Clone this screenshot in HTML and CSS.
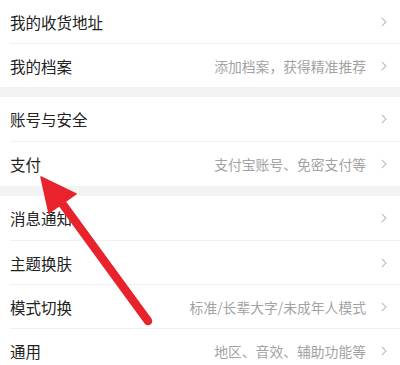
FILE: index.html
```html
<!DOCTYPE html>
<html lang="zh">
<head>
<meta charset="utf-8">
<link rel="stylesheet" href="styles.css">
</head>
<body>
<div class="page">
  <div class="group">
    <div class="row first"><span class="title">我的收货地址</span><span class="desc"></span><svg class="chev" viewBox="0 0 6 10"><polyline points="0.8,0.8 5,5 0.8,9.2"/></svg></div>
    <div class="row"><span class="title">我的档案</span><span class="desc">添加档案，获得精准推荐</span><svg class="chev" viewBox="0 0 6 10"><polyline points="0.8,0.8 5,5 0.8,9.2"/></svg></div>
  </div>
  <div class="band"></div>
  <div class="group">
    <div class="row"><span class="title">账号与安全</span><span class="desc"></span><svg class="chev" viewBox="0 0 6 10"><polyline points="0.8,0.8 5,5 0.8,9.2"/></svg></div>
    <div class="row last"><span class="title">支付</span><span class="desc">支付宝账号、免密支付等</span><svg class="chev" viewBox="0 0 6 10"><polyline points="0.8,0.8 5,5 0.8,9.2"/></svg></div>
  </div>
  <div class="band"></div>
  <div class="group">
    <div class="row"><span class="title">消息通知</span><span class="desc"></span><svg class="chev" viewBox="0 0 6 10"><polyline points="0.8,0.8 5,5 0.8,9.2"/></svg></div>
    <div class="row"><span class="title">主题换肤</span><span class="desc"></span><svg class="chev" viewBox="0 0 6 10"><polyline points="0.8,0.8 5,5 0.8,9.2"/></svg></div>
    <div class="row"><span class="title">模式切换</span><span class="desc">标准/长辈大字/未成年人模式</span><svg class="chev" viewBox="0 0 6 10"><polyline points="0.8,0.8 5,5 0.8,9.2"/></svg></div>
    <div class="row"><span class="title">通用</span><span class="desc">地区、音效、辅助功能等</span><svg class="chev" viewBox="0 0 6 10"><polyline points="0.8,0.8 5,5 0.8,9.2"/></svg></div>
  </div>
  <svg class="arrow" viewBox="0 0 400 365" width="400" height="365">
    <line x1="148" y1="321" x2="56" y2="195" stroke="#e8232b" stroke-width="8.5" stroke-linecap="round"/>
    <polygon points="41,177 76,194 49,213" fill="#e8232b" stroke="#e8232b" stroke-width="1.5" stroke-linejoin="round"/>
  </svg>
</div>
</body>
</html>
```
FILE: styles.css
```css
html, body {
  margin: 0;
  padding: 0;
  background: #ffffff;
}
.page {
  position: relative;
  width: 400px;
  height: 365px;
  overflow: hidden;
  font-family: "Noto Sans CJK SC", "Noto Sans", sans-serif;
}
.group {
  display: flex;
  flex-direction: column;
}
.row {
  display: flex;
  align-items: center;
  height: 44px;
  margin-left: 10px;
  padding-right: 13px;
  border-top: 1px solid #f0f0f0;
  box-sizing: border-box;
}
.group .row:first-child {
  border-top: none;
}
.row.first {
  height: 43px;
}
.row.last {
  height: 45px;
}
.title {
  font-size: 15.5px;
  color: #222222;
  letter-spacing: 0;
}
.desc {
  margin-left: auto;
  font-size: 13.8px;
  color: #a3a3a3;
  margin-right: 15px;
}
.chev {
  width: 6px;
  height: 10px;
  fill: none;
  stroke: #bdbdbd;
  stroke-width: 1.1;
}
.band {
  height: 10px;
  background: #f3f3f3;
}
.arrow {
  position: absolute;
  left: 0;
  top: 0;
  pointer-events: none;
}
```
